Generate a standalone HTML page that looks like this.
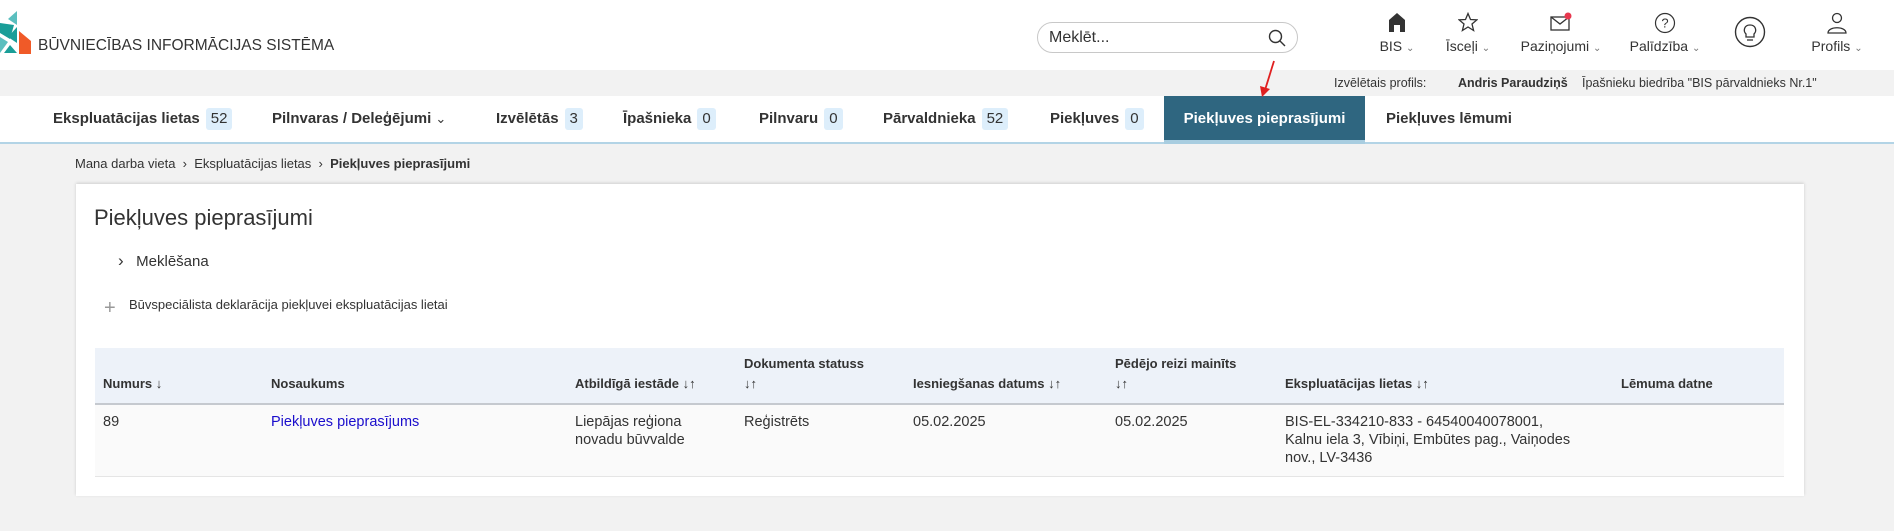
<!DOCTYPE html>
<html><head><meta charset="utf-8"><style>
*{box-sizing:border-box;margin:0;padding:0}
body{width:1894px;height:531px;overflow:hidden;background:#f2f2f2;font-family:"Liberation Sans",sans-serif;color:#333;position:relative}
.abs{position:absolute;white-space:nowrap}
.hdr{position:absolute;left:0;top:0;width:1894px;height:70px;background:#fff}
.strip{position:absolute;left:0;top:70px;width:1894px;height:26px;background:#f2f2f2;font-size:12.5px}
.tabs{position:absolute;left:0;top:96px;width:1894px;height:48px;background:#fff;border-bottom:2px solid #b3d4e6}
.tab{position:absolute;top:0;height:46px;line-height:46px;font-size:15px;font-weight:bold;color:#333}
.badge{display:inline-block;background:#ddeefb;border-radius:3px;padding:0 5px;line-height:22px;font-weight:normal;margin-left:6px}
.act{background:#2f6680;color:#fff;border-bottom:4px solid #a8cde0;height:48px}
.nav{position:absolute;top:12px;text-align:center;font-size:14px;color:#333}
.card{position:absolute;left:76px;top:184px;width:1728px;height:312px;background:#fff;box-shadow:0 -1px 3px rgba(0,0,0,.15)}
table{position:absolute;left:19px;top:164px;width:1689px;border-collapse:collapse;font-size:14.5px}
th{background:#edf2f9;text-align:left;font-size:13px;vertical-align:bottom;padding:0 0 9px 8px;height:56px;border-bottom:2px solid #c5c9cf;line-height:20px}
td{background:#fafafa;vertical-align:top;padding:8px 8px 0 8px;height:72px;border-bottom:1px solid #e5e5e5;line-height:18px}
</style></head><body>
<div class="hdr">
<svg class="abs" style="left:0;top:11px" width="32" height="43" viewBox="0 0 32 43">
<polygon points="17,0 17,14 8,8" fill="#5bbfbf"/>
<polygon points="0,12 14,14 10,28 0,22" fill="#1a9e98"/>
<polygon points="17,16 17,32 8,26" fill="#1a9e98"/>
<polygon points="0,26 8,31 0,42" fill="#5bbfbf"/>
<polygon points="10,34 17,42 4,42" fill="#1a9e98"/>
<polygon points="19,20 31,30 31,43 19,43" fill="#f05a28"/>
</svg>
<div class="abs" style="left:38px;top:37px;font-size:15.5px;color:#333">BŪVNIECĪBAS INFORMĀCIJAS SISTĒMA</div>
<div class="abs" style="left:1037px;top:22px;width:261px;height:31px;border:1px solid #c8c8c8;border-radius:16px;font-size:16px;line-height:29px;padding-left:11px;color:#333">Meklēt...
<svg class="abs" style="right:11px;top:6px" width="18" height="18" viewBox="0 0 18 18"><circle cx="7.5" cy="7.5" r="6" fill="none" stroke="#333" stroke-width="1.4"/><line x1="12" y1="12" x2="17" y2="17" stroke="#333" stroke-width="1.4"/></svg></div>
<div class="nav" style="left:1372px;width:50px"><svg width="18" height="20" viewBox="0 0 18 20"><path d="M1 8 L9 1 L17 8 L17 20 L12 20 L12 13 L6 13 L6 20 L1 20Z" fill="#333"/></svg><div style="margin-top:3px">BIS <span style="font-size:10px;color:#777">&#8964;</span></div></div>
<div class="nav" style="left:1440px;width:56px"><svg width="20" height="20" viewBox="0 0 20 20"><polygon points="10,1.5 12.5,7.5 19,7.8 14,12 15.6,18.5 10,15 4.4,18.5 6,12 1,7.8 7.5,7.5" fill="none" stroke="#333" stroke-width="1.3"/></svg><div style="margin-top:3px">Īsceļi <span style="font-size:10px;color:#777">&#8964;</span></div></div>
<div class="nav" style="left:1516px;width:90px"><svg width="22" height="20" viewBox="0 0 22 20"><rect x="1" y="5" width="18" height="13" fill="none" stroke="#333" stroke-width="1.3"/><path d="M1 5 L10 12 L19 5" fill="none" stroke="#333" stroke-width="1.3"/><circle cx="18" cy="4" r="3.5" fill="#e8384f"/></svg><div style="margin-top:3px">Paziņojumi <span style="font-size:10px;color:#777">&#8964;</span></div></div>
<div class="nav" style="left:1624px;width:82px"><svg width="22" height="22" viewBox="0 0 22 22"><circle cx="11" cy="11" r="9.5" fill="none" stroke="#333" stroke-width="1.2"/><text x="11" y="15.5" font-size="13" text-anchor="middle" fill="#333" font-family="Liberation Sans">?</text></svg><div style="margin-top:1px">Palīdzība <span style="font-size:10px;color:#777">&#8964;</span></div></div>
<svg class="abs" style="left:1734px;top:16px" width="32" height="32" viewBox="0 0 32 32"><circle cx="16" cy="16" r="14.5" fill="none" stroke="#333" stroke-width="1.4"/><path d="M12 18 C9 15 10 9 16 9 C22 9 23 15 20 18 L20 21 L12 21Z" fill="none" stroke="#333" stroke-width="1.3"/><line x1="13" y1="24" x2="19" y2="24" stroke="#333" stroke-width="1.3"/></svg>
<div class="nav" style="left:1806px;width:62px"><svg width="22" height="22" viewBox="0 0 22 22"><circle cx="11" cy="6" r="4.5" fill="none" stroke="#333" stroke-width="1.3"/><path d="M2 21 C2 14 20 14 20 21Z" fill="none" stroke="#333" stroke-width="1.3"/></svg><div style="margin-top:1px">Profils <span style="font-size:10px;color:#777">&#8964;</span></div></div>
</div>
<div class="strip"><span class="abs" style="left:1334px;top:6px">Izvēlētais profils:</span><span class="abs" style="left:1458px;top:6px;font-weight:bold">Andris Paraudziņš</span><span class="abs" style="left:1582px;top:6px">Īpašnieku biedrība "BIS pārvaldnieks Nr.1"</span></div>
<div class="tabs">
<div class="tab" style="left:53px">Ekspluatācijas lietas<span class="badge">52</span></div>
<div class="tab" style="left:272px">Pilnvaras / Deleģējumi <span style="font-weight:normal;font-size:13px">&#8964;</span></div>
<div class="tab" style="left:496px">Izvēlētās<span class="badge">3</span></div>
<div class="tab" style="left:623px">Īpašnieka<span class="badge">0</span></div>
<div class="tab" style="left:759px">Pilnvaru<span class="badge">0</span></div>
<div class="tab" style="left:883px">Pārvaldnieka<span class="badge">52</span></div>
<div class="tab" style="left:1050px">Piekļuves<span class="badge">0</span></div>
<div class="tab act" style="left:1164px;width:201px;text-align:center">Piekļuves pieprasījumi</div>
<div class="tab" style="left:1386px">Piekļuves lēmumi</div>
</div>
<svg class="abs" style="left:1258px;top:60px;z-index:5" width="22" height="38" viewBox="0 0 22 38"><line x1="16" y1="1" x2="7" y2="30" stroke="#e02020" stroke-width="1.8"/><polygon points="2,26 12,29 4,37" fill="#e02020"/></svg>
<div class="abs" style="left:75px;top:156px;font-size:13px">Mana darba vieta &nbsp;&#x203A;&nbsp; Ekspluatācijas lietas &nbsp;&#x203A;&nbsp; <b>Piekļuves pieprasījumi</b></div>
<div class="card">
<div class="abs" style="left:18px;top:21px;font-size:22px">Piekļuves pieprasījumi</div>
<div class="abs" style="left:42px;top:67px;font-size:15px"><span style="font-size:17px">&#x203A;</span>&nbsp;&nbsp; Meklēšana</div>
<div class="abs" style="left:28px;top:113px;font-size:20px;color:#999;font-weight:lighter">+</div>
<div class="abs" style="left:53px;top:113px;font-size:13px">Būvspeciālista deklarācija piekļuvei ekspluatācijas lietai</div>
<table>
<tr><th style="width:168px">Numurs ↓</th><th style="width:304px">Nosaukums</th><th style="width:169px">Atbildīgā iestāde ↓↑</th><th style="width:169px">Dokumenta statuss<br>↓↑</th><th style="width:202px">Iesniegšanas datums ↓↑</th><th style="width:170px">Pēdējo reizi mainīts<br>↓↑</th><th style="width:336px">Ekspluatācijas lietas ↓↑</th><th>Lēmuma datne</th></tr>
<tr><td>89</td><td style="color:#1a0dcc">Piekļuves pieprasījums</td><td>Liepājas reģiona<br>novadu būvvalde</td><td>Reģistrēts</td><td>05.02.2025</td><td>05.02.2025</td><td>BIS-EL-334210-833 - 64540040078001,<br>Kalnu iela 3, Vībiņi, Embūtes pag., Vaiņodes<br>nov., LV-3436</td><td></td></tr>
</table>
</div>
</body></html>
